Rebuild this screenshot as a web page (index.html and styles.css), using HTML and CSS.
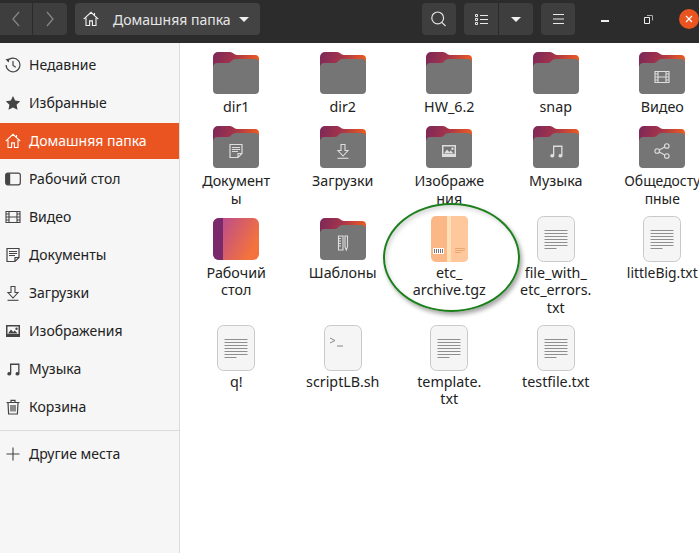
FILE: index.html
```html
<!DOCTYPE html>
<html lang="ru">
<head>
    <meta charset="UTF-8">
    <meta name="viewport" content="width=device-width, initial-scale=1.0">
    <link rel="stylesheet" href="styles.css">
    <title>Домашняя папка</title>
</head>
<body>
    <!-- icon sprite -->
    <svg class="sprite" xmlns="http://www.w3.org/2000/svg">
        <defs>
            <linearGradient id="folder_back" x1="0" y1="0" x2="1" y2="0.15">
                <stop offset="0" stop-color="#7a2859"/>
                <stop offset="0.5" stop-color="#a5344a"/>
                <stop offset="1" stop-color="#ea5a22"/>
            </linearGradient>
            <linearGradient id="desk_grad" x1="0" y1="0" x2="1" y2="0.5">
                <stop offset="0" stop-color="#b2469a"/>
                <stop offset="1" stop-color="#f4733c"/>
            </linearGradient>
        </defs>
        <symbol id="folder" viewBox="0 0 46 42">
            <path fill="url(#folder_back)" d="M0 5a5 5 0 0 1 5-5h12c3 0 4 3 7 3h18a4 4 0 0 1 4 4v12H0z"/>
            <path fill="#757575" d="M0 15c0-2 2-4 4-4h11c3 0 4-4 7-4h20a4 4 0 0 1 4 4v27a4 4 0 0 1-4 4H4a4 4 0 0 1-4-4z"/>
        </symbol>
        <symbol id="text_file" viewBox="0 0 38 46">
            <rect x="0.5" y="0.5" width="37" height="45" rx="6" fill="#f5f5f5" stroke="#c9c9c9"/>
            <path stroke="#8f8f8f" d="M7.5 14.5h23M7.5 17.5h23M7.5 20.5h23M7.5 23.5h23M7.5 26.5h23M7.5 29.5h23M7.5 32.5h12"/>
        </symbol>
        <symbol id="i_recent" viewBox="0 0 16 16">
            <path fill="none" stroke="currentColor" stroke-width="1.2" d="M2.2 4.2A6.9 6.9 0 1 1 1.1 8M8 4v4.4l2.8 1.8"/>
            <path fill="currentColor" d="M.5 2.2 4.4 1.6 3.9 5.5z"/>
        </symbol>
        <symbol id="i_star" viewBox="0 0 16 16">
            <path fill="currentColor" d="M8 1l2.2 4.6 5 .7-3.6 3.5.9 5L8 12.4l-4.5 2.4.9-5L.8 6.3l5-.7z"/>
        </symbol>
        <symbol id="i_home" viewBox="0 0 16 16">
            <path fill="none" stroke="currentColor" stroke-width="1.1" d="M.7 8.2 8 1.3l7.3 6.9M3 6.8v7.7h3.6v-4.6h2.8v4.6H13V6.8M11.5 2v2.8"/>
        </symbol>
        <symbol id="i_desktop" viewBox="0 0 16 16">
            <rect x="0.7" y="2.2" width="14.6" height="11.6" rx="2" fill="none" stroke="currentColor" stroke-width="1.2"/>
            <path fill="currentColor" d="M2.5 2.2h2.7v11.6H2.5a1.8 1.8 0 0 1-1.8-1.8V4a1.8 1.8 0 0 1 1.8-1.8z"/>
        </symbol>
        <symbol id="i_video" viewBox="0 0 16 16">
            <path fill="none" stroke="currentColor" stroke-width="1.1" d="M1 2.5h14v11H1zM4 2.5v11M12 2.5v11M4 8h8M1 5h3M1 8h3M1 11h3M12 5h3M12 8h3M12 11h3"/>
        </symbol>
        <symbol id="i_doc" viewBox="0 0 16 16">
            <path fill="none" stroke="currentColor" stroke-width="1.2" d="M2 1.5h12v9l-4 4H2zM14 10.5h-4v4"/>
            <path stroke="currentColor" d="M4 4.5h8M4 6.5h8M4 8.5h6"/>
        </symbol>
        <symbol id="i_download" viewBox="0 0 16 16">
            <path fill="none" stroke="currentColor" stroke-width="1.1" d="M6 1.5h4v6h3l-5 5.500-5-5.500h3z"/>
            <path stroke="currentColor" stroke-width="1.1" d="M2.500 15.300h11"/>
        </symbol>
        <symbol id="i_image" viewBox="0 0 16 16">
            <path fill="currentColor" fill-rule="evenodd" d="M1 2h14v12H1zM2.500 3.500v7.500h11V3.500zM3 10.500l3-4 2.200 2.500 1.500-1.500 3 3zM11.500 4.500a1.200 1.200 0 1 1 0 2.400 1.200 1.200 0 0 1 0-2.400z"/>
        </symbol>
        <symbol id="i_music" viewBox="0 0 16 16">
            <path fill="currentColor" d="M5 2.500h9.500v10.300a2 1.700 0 1 1-1.300-1.600V4H6.300v8.800a2 1.700 0 1 1-1.300-1.600z"/>
        </symbol>
        <symbol id="i_trash" viewBox="0 0 16 16">
            <path fill="none" stroke="currentColor" stroke-width="1.2" d="M1.500 3.500h13M3 3.500l.6 11.500h8.800L13 3.500M6 3V1.300h4V3M6 6v6.500M8 6v6.500M10 6v6.500"/>
        </symbol>
        <symbol id="i_plus" viewBox="0 0 16 16">
            <path stroke="currentColor" stroke-width="1.1" d="M8 1.500v13M1.500 8h13"/>
        </symbol>
        <symbol id="i_share" viewBox="0 0 16 16">
            <g fill="none" stroke="currentColor" stroke-width="1.1">
                <circle cx="3.200" cy="8" r="2.300"/>
                <circle cx="12.800" cy="3" r="2.300"/>
                <circle cx="12.800" cy="13" r="2.300"/>
                <path d="M5.300 7 10.700 4M5.300 9l5.400 3"/>
            </g>
        </symbol>
        <symbol id="i_template" viewBox="0 0 16 16">
            <path fill="none" stroke="currentColor" stroke-width="1.100" d="M3.500 1h4.500v14H3.500zM10 1h2.500v11l-1.250 3L10 12z"/>
            <path stroke="currentColor" d="M3.500 3.500h2.500M3.500 6h2.500M3.500 8.500h2.500M3.500 11h2.500"/>
        </symbol>
    </svg>

    <div class="window">
        <header class="headerbar">
            <div class="btn_group nav_group">
                <div class="hbtn nav_btn">
                    <svg width="10" height="18" viewBox="0 0 10 18"><path fill="none" stroke="#858585" stroke-width="1.300" d="M8 2 2 9l6 7"/></svg>
                </div>
                <div class="hbtn nav_btn">
                    <svg width="10" height="18" viewBox="0 0 10 18"><path fill="none" stroke="#858585" stroke-width="1.300" d="M2 2l6 7-6 7"/></svg>
                </div>
            </div>
            <div class="path_bar">
                <svg class="path_icon"><use href="#i_home"/></svg>
                <span class="path_name">Домашняя папка</span>
                <span class="arrow_down"></span>
            </div>
            <div class="header_right">
                <div class="hbtn search_btn">
                    <svg width="16" height="16" viewBox="0 0 16 16"><path fill="none" stroke="#e4e4e4" stroke-width="1.200" d="M12.600 6.900A5.900 5.900 0 1 1 .8 6.900a5.900 5.900 0 0 1 11.800 0zM10.800 11.300l3.700 3.700"/></svg>
                </div>
                <div class="btn_group view_group">
                    <div class="hbtn view_btn">
                        <svg width="13" height="11" viewBox="0 0 13 11"><path fill="none" stroke="#e8e8e8" d="M.5.500h2v2h-2zM.5 4.500h2v2h-2zM.5 8.500h2v2h-2zM5 1.500h8M5 5.500h8M5 9.500h8"/></svg>
                    </div>
                    <div class="hbtn view_arrow"><span class="arrow_down"></span></div>
                </div>
                <div class="hbtn menu_btn">
                    <svg width="11" height="10" viewBox="0 0 11 10"><path stroke="#e8e8e8" d="M0 .500h11M0 5h11M0 9.500h11"/></svg>
                </div>
                <div class="window_btns">
                    <span class="win_min"></span>
                    <svg class="win_max" width="9" height="10" viewBox="0 0 9 10"><path fill="none" stroke="#eee" d="M.5 3.500h5v6h-5z"/><path fill="none" stroke="#aaa" d="M3 1.500h5.500v5"/></svg>
                    <span class="win_close">
                        <svg width="8" height="8" viewBox="0 0 8 8"><path stroke="#fff" stroke-width="1.200" d="M1 1l6 6M7 1 1 7"/></svg>
                    </span>
                </div>
            </div>
        </header>

        <div class="content">
            <nav class="sidebar">
                <a class="place"><svg class="place_icon"><use href="#i_recent"/></svg>Недавние</a>
                <a class="place"><svg class="place_icon"><use href="#i_star"/></svg>Избранные</a>
                <a class="place active"><svg class="place_icon"><use href="#i_home"/></svg>Домашняя папка</a>
                <a class="place"><svg class="place_icon"><use href="#i_desktop"/></svg>Рабочий стол</a>
                <a class="place"><svg class="place_icon"><use href="#i_video"/></svg>Видео</a>
                <a class="place"><svg class="place_icon"><use href="#i_doc"/></svg>Документы</a>
                <a class="place"><svg class="place_icon"><use href="#i_download"/></svg>Загрузки</a>
                <a class="place"><svg class="place_icon"><use href="#i_image"/></svg>Изображения</a>
                <a class="place"><svg class="place_icon"><use href="#i_music"/></svg>Музыка</a>
                <a class="place"><svg class="place_icon"><use href="#i_trash"/></svg>Корзина</a>
                <hr class="places_sep">
                <a class="place"><svg class="place_icon"><use href="#i_plus"/></svg>Другие места</a>
            </nav>

            <main class="files">
                <div class="item"><div class="thumb"><svg class="folder_icon"><use href="#folder"/></svg></div><div class="label">dir1</div></div>
                <div class="item"><div class="thumb"><svg class="folder_icon"><use href="#folder"/></svg></div><div class="label">dir2</div></div>
                <div class="item"><div class="thumb"><svg class="folder_icon"><use href="#folder"/></svg></div><div class="label">HW_6.2</div></div>
                <div class="item"><div class="thumb"><svg class="folder_icon"><use href="#folder"/></svg></div><div class="label">snap</div></div>
                <div class="item"><div class="thumb"><svg class="folder_icon"><use href="#folder"/><use class="emblem" href="#i_video" x="15" y="17" width="16" height="16"/></svg></div><div class="label">Видео</div></div>

                <div class="item"><div class="thumb"><svg class="folder_icon"><use href="#folder"/><use class="emblem" href="#i_doc" x="15" y="17" width="16" height="16"/></svg></div><div class="label">Документ<br>ы</div></div>
                <div class="item"><div class="thumb"><svg class="folder_icon"><use href="#folder"/><use class="emblem" href="#i_download" x="15" y="17" width="16" height="16"/></svg></div><div class="label">Загрузки</div></div>
                <div class="item"><div class="thumb"><svg class="folder_icon"><use href="#folder"/><use class="emblem" href="#i_image" x="15" y="17" width="16" height="16"/></svg></div><div class="label">Изображе<br>ния</div></div>
                <div class="item"><div class="thumb"><svg class="folder_icon"><use href="#folder"/><use class="emblem" href="#i_music" x="15" y="17" width="16" height="16"/></svg></div><div class="label">Музыка</div></div>
                <div class="item"><div class="thumb"><svg class="folder_icon"><use href="#folder"/><use class="emblem" href="#i_share" x="15" y="17" width="16" height="16"/></svg></div><div class="label edge_label">Общедосту<br>пные</div></div>

                <div class="item"><div class="thumb">
                    <svg class="folder_icon" viewBox="0 0 46 42">
                        <rect width="46" height="42" rx="6" fill="url(#desk_grad)"/>
                        <path fill="#7a2a6b" d="M6 0h4v42H6a6 6 0 0 1-6-6V6a6 6 0 0 1 6-6z"/>
                    </svg>
                </div><div class="label">Рабочий<br>стол</div></div>
                <div class="item"><div class="thumb"><svg class="folder_icon"><use href="#folder"/><use class="emblem" href="#i_template" x="15" y="17" width="16" height="16"/></svg></div><div class="label">Шаблоны</div></div>
                <div class="item"><div class="thumb">
                    <svg class="archive_icon" viewBox="0 0 38 46">
                        <rect x="1" width="37" height="46" rx="5" fill="#fbb785"/>
                        <path fill="#fec89c" d="M21 0h12a5 5 0 0 1 5 5v36a5 5 0 0 1-5 5H21z"/>
                        <rect x="17" width="4" height="46" fill="#fde0b6"/>
                        <rect x="3" y="32" width="11" height="6" fill="#fff"/>
                        <path stroke="#777" d="M4.500 33v4M6.500 33v4M8.500 33v4M10.500 33v4M12.500 33v4"/>
                        <path stroke="#e9a873" d="M25 32.500h10M25 34.500h10M25 36.500h6"/>
                    </svg>
                </div><div class="label">etc_<br>archive.tgz</div></div>
                <div class="item"><div class="thumb"><svg class="file_icon"><use href="#text_file"/></svg></div><div class="label">file_with_<br>etc_errors.<br>txt</div></div>
                <div class="item"><div class="thumb"><svg class="file_icon"><use href="#text_file"/></svg></div><div class="label edge_label">littleBig.txt</div></div>

                <div class="item"><div class="thumb"><svg class="file_icon"><use href="#text_file"/></svg></div><div class="label">q!</div></div>
                <div class="item"><div class="thumb">
                    <svg class="file_icon" viewBox="0 0 38 46">
                        <rect x="0.5" y="0.500" width="37" height="45" rx="6" fill="#f5f5f5" stroke="#c9c9c9"/>
                        <path fill="none" stroke="#888" d="M6 13l5 2.500-5 2.500M13 21h6"/>
                    </svg>
                </div><div class="label">scriptLB.sh</div></div>
                <div class="item"><div class="thumb"><svg class="file_icon"><use href="#text_file"/></svg></div><div class="label">template.<br>txt</div></div>
                <div class="item"><div class="thumb"><svg class="file_icon"><use href="#text_file"/></svg></div><div class="label">testfile.txt</div></div>
            </main>
        </div>
    </div>

    <!-- hand drawn highlight round the archive -->
    <div class="highlight"></div>
</body>
</html>
```

FILE: styles.css
```css
html, body {
    margin: 0;
    height: 100%;
    overflow: hidden;
}
body {
    font-family: "Noto Sans", sans-serif;
    font-size: 14px;
    color: #222;
    background: #fff;
}
.sprite {
    display: block;
    width: 0;
    height: 0;
}
.window {
    display: flex;
    flex-direction: column;
    height: 553px;
}

/* header */
.headerbar {
    display: flex;
    align-items: flex-start;
    height: 43px;
    flex: none;
    box-sizing: border-box;
    padding-top: 3px;
    background: #2c2c2c;
}
.hbtn {
    display: flex;
    align-items: center;
    justify-content: center;
    height: 32px;
    background: #3e3e3e;
}
.btn_group {
    display: flex;
}
.nav_group {
    width: 67px;
}
.nav_btn {
    width: 32px;
}
.nav_btn + .nav_btn {
    width: 34px;
    border-left: 1px solid #2a2a2a;
    border-radius: 0 4px 4px 0;
}
.path_bar {
    display: flex;
    align-items: center;
    width: 195px;
    height: 32px;
    margin-left: 8px;
    background: #434343;
    border-radius: 4px;
    color: #e6e6e6;
}
.path_icon {
    width: 16px;
    height: 16px;
    margin-left: 8px;
    color: #f2f2f2;
}
.path_name {
    margin-left: 14px;
}
.arrow_down {
    width: 0;
    height: 0;
    border-left: 5px solid transparent;
    border-right: 5px solid transparent;
    border-top: 5px solid #f0f0f0;
}
.path_bar .arrow_down {
    margin-left: auto;
    margin-right: 11px;
}
.header_right {
    display: flex;
    align-items: flex-start;
    margin-left: 162px;
}
.search_btn {
    width: 34px;
    border-radius: 4px;
}
.view_group {
    margin-left: 8px;
}
.view_btn {
    width: 34px;
    border-radius: 4px 0 0 4px;
}
.view_arrow {
    width: 34px;
    border-left: 1px solid #2a2a2a;
    border-radius: 0 4px 4px 0;
}
.menu_btn {
    width: 34px;
    margin-left: 8px;
    border-radius: 4px;
}
.window_btns {
    display: flex;
    align-items: center;
    height: 32px;
    margin-left: 26px;
}
.win_min {
    width: 8px;
    height: 2px;
    margin-top: 4px;
    background: #eee;
}
.win_max {
    margin-left: 35px;
}
.win_close {
    display: flex;
    align-items: center;
    justify-content: center;
    flex: none;
    width: 20px;
    height: 20px;
    margin-left: 26px;
    border-radius: 50%;
    background: #e95420;
}

/* sidebar */
.content {
    display: flex;
    flex: 1;
    min-height: 0;
}
.sidebar {
    flex: none;
    display: flex;
    flex-direction: column;
    gap: 2px;
    width: 179px;
    padding-top: 4px;
    background: #f6f6f6;
    border-right: 1px solid #dcdcdc;
}
.place {
    display: flex;
    align-items: center;
    box-sizing: border-box;
    height: 36px;
    padding-bottom: 2px;
    color: #222;
}
.place.active {
    background: #e95420;
    color: #fff;
}
.place_icon {
    width: 16px;
    height: 16px;
    margin: 2px 8px 0 5px;
    flex: none;
    color: #444;
}
.active .place_icon {
    color: #fff;
}
.places_sep {
    width: 100%;
    height: 1px;
    margin: 3px 0 3px;
    border: none;
    background: #dcdcdc;
}

/* file grid */
.files {
    flex: 1;
    display: grid;
    grid-template-columns: repeat(5, 106.5px);
    grid-auto-rows: min-content;
    align-content: start;
    padding: 7px 0 0 3px;
    min-width: 0;
}
.item {
    display: flex;
    flex-direction: column;
    align-items: center;
    padding-bottom: 8.5px;
}
.thumb {
    display: flex;
    align-items: center;
    justify-content: center;
    height: 46px;
    margin-bottom: 2px;
}
.folder_icon {
    width: 46px;
    height: 42px;
    color: #ddd;
}
.emblem {
    color: #dedede;
}
.file_icon, .archive_icon {
    width: 38px;
    height: 46px;
}
.label {
    text-align: center;
    font-size: 14.3px;
    line-height: 17.5px;
    white-space: nowrap;
    color: #222;
}
.edge_label {
    font-size: 13.9px;
}

/* green circle drawn on the screenshot */
.highlight {
    position: absolute;
    left: 383px;
    top: 203px;
    width: 133px;
    height: 105px;
    border: 2px solid #1c7f1c;
    border-radius: 50%;
    box-shadow: 2px 3px 4px rgba(0, 0, 0, 0.35), inset 2px 3px 4px rgba(0, 0, 0, 0.14);
}
```
